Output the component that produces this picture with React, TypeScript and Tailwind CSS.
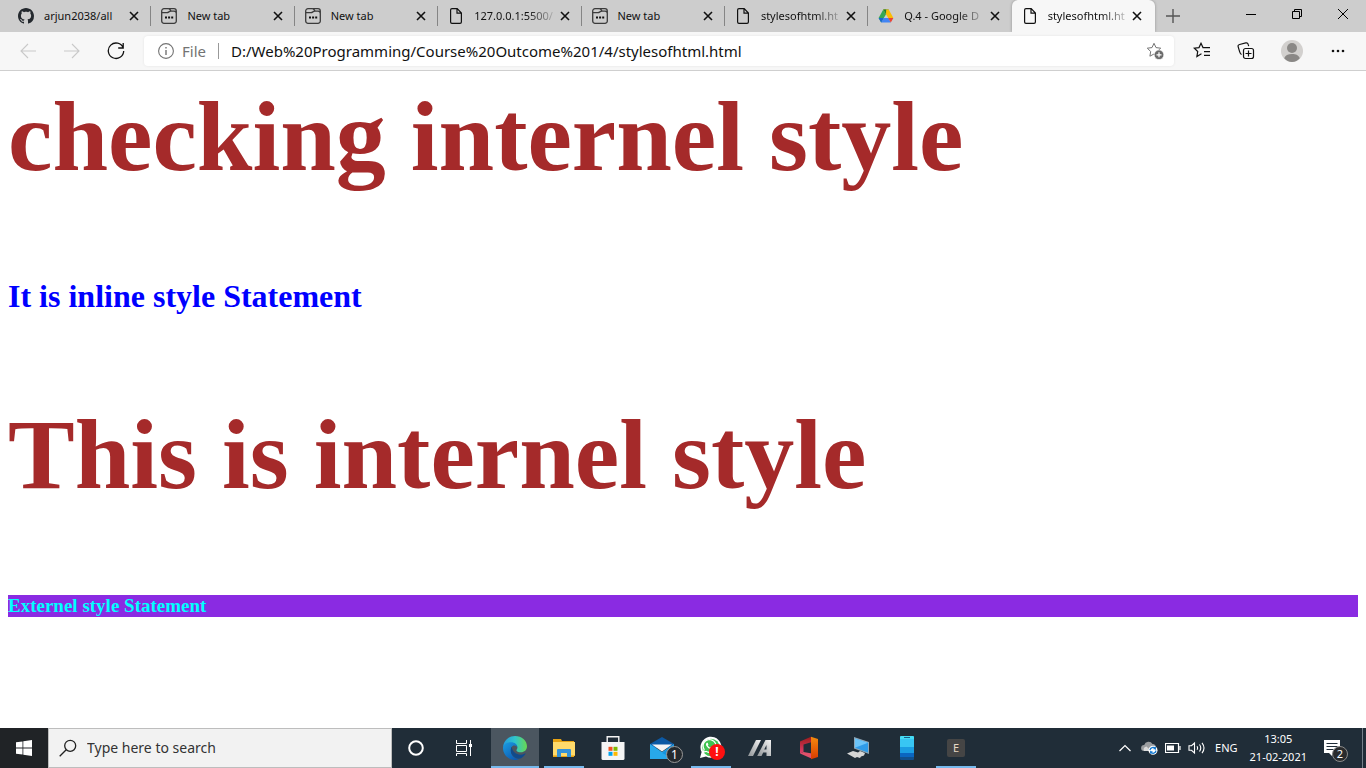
import React from "react";
import { FaWhatsapp } from "react-icons/fa";

type IconKind = "github" | "newtab" | "page" | "drive";

const tabs: { icon: IconKind; title: string; active?: boolean; faded?: boolean }[] = [
  { icon: "github", title: "arjun2038/all" },
  { icon: "newtab", title: "New tab" },
  { icon: "newtab", title: "New tab" },
  { icon: "page", title: "127.0.0.1:5500/", faded: true },
  { icon: "newtab", title: "New tab" },
  { icon: "page", title: "stylesofhtml.ht", faded: true },
  { icon: "drive", title: "Q.4 - Google D", faded: true },
  { icon: "page", title: "stylesofhtml.ht", active: true, faded: true },
];

function TabIcon({ kind }: { kind: IconKind }) {
  if (kind === "github")
    return (
      <svg viewBox="0 0 16 16" className="size-4 shrink-0" fill="#24292e">
        <path d="M8 0C3.58 0 0 3.58 0 8c0 3.54 2.29 6.53 5.47 7.59.4.07.55-.17.55-.38 0-.19-.01-.82-.01-1.49-2.01.37-2.53-.49-2.69-.94-.09-.23-.48-.94-.82-1.13-.28-.15-.68-.52-.01-.53.63-.01 1.08.58 1.23.82.72 1.21 1.87.87 2.33.66.07-.52.28-.87.51-1.07-1.78-.2-3.64-.89-3.64-3.95 0-.87.31-1.59.82-2.15-.08-.2-.36-1.02.08-2.12 0 0 .67-.21 2.2.82.64-.18 1.32-.27 2-.27s1.36.09 2 .27c1.53-1.04 2.2-.82 2.2-.82.44 1.1.16 1.92.08 2.12.51.56.82 1.27.82 2.15 0 3.07-1.87 3.75-3.65 3.95.29.25.54.73.54 1.48 0 1.07-.01 1.93-.01 2.2 0 .21.15.46.55.38A8.01 8.01 0 0 0 16 8c0-4.42-3.58-8-8-8z" />
      </svg>
    );
  if (kind === "newtab")
    return (
      <svg viewBox="0 0 16 16" className="size-4 shrink-0" fill="none" stroke="#3b3b3b" strokeWidth="1.3">
        <path d="M.7 3A2.3 2.3 0 0 1 3 .7h4.200c1 0 1.500.500 2 1.200l.9 1.300h3a2.300 2.300 0 0 1 2.200 2.300V13a2.300 2.300 0 0 1-2.300 2.300H3A2.300 2.300 0 0 1 .7 13zM.7 4.700h5.500c1.200 0 1.600-1.500 3.900-1.500M8 .7h5A2.300 2.300 0 0 1 15.300 3v3" />
        <path d="M4 9.500h2M7.100 9.500h2M10.200 9.500h2" stroke="#111" strokeWidth="2" />
      </svg>
    );
  if (kind === "drive")
    return (
      <svg viewBox="0 0 16 16" className="size-4 shrink-0">
        <path d="M5.300 1.500h5.400L8 6.200z" fill="#188038" />
        <path d="M5.300 1.500 8 6.200 3.200 14.500.6 10z" fill="#34a853" />
        <path d="M5.300 1.500h5.400L15.400 10h-5.200z" fill="#fbbc04" />
        <path d="M5.300 1.500h2.900L8 6.200z" fill="#188038" />
        <path d="M5.500 10h5l2.300 4.500H3.200z" fill="#4285f4" />
        <path d="M.6 10h4.900l-2.300 4.500z" fill="#1967d2" />
        <path d="M10.200 10h5.200l-2.600 4.500z" fill="#ea4335" />
      </svg>
    );
  return (
    <svg viewBox="0 0 16 16" className="size-4 shrink-0" fill="none" stroke="#111" strokeWidth="1.200">
      <path d="M2.600 2A1.400 1.400 0 0 1 4 .6h5.200L13.400 5v9a1.400 1.400 0 0 1-1.400 1.400H4A1.400 1.400 0 0 1 2.600 14zM9 .8V5.200h4.200" />
    </svg>
  );
}

function TabStrip() {
  return (
    <header className="flex h-8 shrink-0 bg-[#cdcdcd] pl-2">
      <nav aria-label="Tabs" className="flex max-w-[1147px] flex-1">
        {tabs.map((tab, i) => (
          <div
            key={i}
            className={
              tab.active
                ? "flex min-w-0 flex-1 items-center rounded-t-md bg-[#f7f7f7] pr-3 pl-2.5 shadow-[0_0_3px_rgba(0,0,0,0.3)]"
                : "flex min-w-0 flex-1 items-center pr-3 pl-2.5"
            }
          >
            <TabIcon kind={tab.icon} />
            <button
              className={
                tab.faded
                  ? "ml-2.5 min-w-0 flex-1 text-left text-[11px] whitespace-nowrap text-[#111] [mask-image:linear-gradient(to_right,black_54px,transparent_84px)]"
                  : "ml-2.5 min-w-0 flex-1 text-left text-[11px] whitespace-nowrap text-[#111]"
              }
            >
              {tab.title}
            </button>
            <button aria-label="Close tab" className="flex size-3 items-center justify-center">
              <svg viewBox="0 0 10 10" className="size-2.5" stroke="#111" strokeWidth="1.600">
                <path d="m1 1 8 8M9 1 1 9" />
              </svg>
            </button>
            {i < 7 && <span className={i < 6 ? "-mr-3 ml-2.5 h-5 w-px bg-[#858585]" : "-mr-3 ml-2.5 w-px"} />}
          </div>
        ))}
      </nav>
      <button aria-label="New tab" className="flex w-9 items-center justify-center">
        <svg viewBox="0 0 14 14" className="size-3.5" stroke="#555" strokeWidth="1.400">
          <path d="M7 0v14M0 7h14" />
        </svg>
      </button>
      <div className="ml-auto flex h-7">
        <button aria-label="Minimize" className="flex w-[46px] items-center justify-center">
          <svg viewBox="0 0 10 10" className="size-2.5" stroke="#000"><path d="M0 5.500h10" /></svg>
        </button>
        <button aria-label="Restore" className="flex w-[46px] items-center justify-center">
          <svg viewBox="0 0 10 10" className="size-2.5" fill="none" stroke="#000"><path d="M.5 2.500h7v7h-7zM2.500 2.500v-2h7v7h-2" /></svg>
        </button>
        <button aria-label="Close" className="flex w-[46px] items-center justify-center">
          <svg viewBox="0 0 10 10" className="size-2.5" stroke="#000"><path d="m0 0 10 10M10 0 0 10" /></svg>
        </button>
      </div>
    </header>
  );
}

const star = "m8 1.300 2 4.300 4.700.6-3.400 3.300.8 4.700L8 12l-4.100 2.200.8-4.700L1.300 6.200 6 5.600z";

function AddressBar() {
  return (
    <div className="flex h-[39px] shrink-0 items-center border-b border-[#cfcfcf] bg-[#f7f7f7]">
      <button aria-label="Back" className="ml-1.5 flex w-11 justify-center">
        <svg viewBox="0 0 16 16" className="size-4" fill="none" stroke="#c9c9c9" strokeWidth="1.100"><path d="M16 8H1M8 1 1 8l7 7" /></svg>
      </button>
      <button aria-label="Forward" className="flex w-11 justify-center">
        <svg viewBox="0 0 16 16" className="size-4" fill="none" stroke="#c9c9c9" strokeWidth="1.100"><path d="M0 8h15M8 1l7 7-7 7" /></svg>
      </button>
      <button aria-label="Refresh" className="flex w-11 justify-center">
        <svg viewBox="0 0 18 18" className="size-[18px]" fill="none" stroke="#111" strokeWidth="1.300"><path d="M16.200 6A7.700 7.700 0 1 0 16.700 9M16.200 1v5h-5" /></svg>
      </button>
      <div className="ml-1.5 flex h-[30px] min-w-0 flex-1 items-center rounded bg-white pl-3.5 shadow-[0_0_3px_rgba(0,0,0,0.08)]">
        <svg viewBox="0 0 16 16" className="size-4 shrink-0" fill="none" stroke="#737373" strokeWidth="1.100">
          <circle cx="8" cy="8" r="7.400" /><path d="M8 7v5M8 4v1.500" strokeWidth="1.400" />
        </svg>
        <label htmlFor="url" className="ml-2 text-[15px] text-[#737373]">File</label>
        <span className="mx-3 h-4 w-px bg-[#999]" />
        <input id="url" className="min-w-0 flex-1 bg-transparent text-[15px] text-[#111] outline-none" defaultValue="D:/Web%20Programming/Course%20Outcome%201/4/stylesofhtml.html" />
        <button aria-label="Add to favorites" className="mr-2.5">
          <svg viewBox="0 0 18 18" className="size-[18px]" fill="none" stroke="#737373">
            <path d={star} /><circle cx="13" cy="12.800" r="4.800" fill="#6b6b6b" stroke="#fff" strokeWidth=".6" /><path d="M10.500 12.800h5M13 10.300v5" stroke="#fff" strokeWidth="1.200" />
          </svg>
        </button>
      </div>
      <button aria-label="Favorites" className="ml-1.5 flex w-11 justify-center">
        <svg viewBox="0 0 18 18" className="size-[18px]" fill="none" stroke="#111" strokeWidth="1.200">
          <path d="M8.500 11.800 8 12l-4.100 2.600.8-5.100L1.300 6.200 6 5.600l2-4.300 2 4.300h7M11 9.600h6M11 13.400h6" />
        </svg>
      </button>
      <button aria-label="Collections" className="flex w-11 justify-center">
        <svg viewBox="0 0 18 18" className="size-[18px]" fill="none" stroke="#111" strokeWidth="1.200">
          <rect x="6.500" y="6.500" width="10" height="10" rx="2" /><path d="M11.500 8.500v6M8.500 11.500h6M4.600 12.500C3.300 12 3 11 2.600 9.600L1.200 4.800c-.4-1.300.2-2 1.400-2.300l6.200-1.600c1.200-.3 2 .2 2.300 1.300l.6 2" />
        </svg>
      </button>
      <button aria-label="Profile" className="flex w-12 justify-center">
        <svg viewBox="0 0 22 22" className="size-[22px]">
          <circle cx="11" cy="11" r="11" fill="#d2d0ce" /><circle cx="11" cy="8" r="5" fill="#8a8886" /><path d="M3.200 18.300C4 15.500 7 14 11 14s7 1.500 7.800 4.300A11 11 0 0 1 11 22a11 11 0 0 1-7.800-3.700z" fill="#8a8886" />
        </svg>
      </button>
      <button aria-label="Settings and more" className="mr-1.5 flex w-11 justify-center">
        <svg viewBox="0 0 14 4" className="h-1 w-3.5" fill="#111"><circle cx="2" cy="2" r="1.300" /><circle cx="7" cy="2" r="1.300" /><circle cx="12" cy="2" r="1.300" /></svg>
      </button>
    </div>
  );
}

function EdgeIcon() {
  return (
    <svg viewBox="0 0 24 24" className="size-6">
      <defs>
        <linearGradient id="edgeTop" x1="0" y1="0.500" x2="1" y2="0.500"><stop offset="0" stopColor="#2499dc" /><stop offset=".5" stopColor="#30c5cc" /><stop offset="1" stopColor="#68d850" /></linearGradient>
        <linearGradient id="edgeBody" x1="0" y1="0" x2="0.700" y2="1"><stop offset="0" stopColor="#1b9de2" /><stop offset="1" stopColor="#0d5ab2" /></linearGradient>
      </defs>
      <path d="M.1 11C.6 4.600 5.800 0 12 0c6.800 0 12 4.800 12 10.300 0 3.700-2.700 6-6 6-2.600 0-4.600-1-4.600-2.100 0-.7 1-1.100 1-2.700 0-2.200-2.200-4-5-4C4.800 7.500 1 8.500.1 11z" fill="url(#edgeTop)" />
      <path d="M0 12c0-3.600 4-5.800 8-5.800 3.800 0 6.400 2.200 6.400 5.300-.2-1-1.500-2-3.200-2-2.300 0-3.400 2.500-3.400 5 0 4.700 3.700 8.700 8.700 8.300-1.300.8-3 1.200-4.500 1.200C5.400 24 0 18.700 0 12z" fill="url(#edgeBody)" />
      <path d="M8.700 10.800c-.6 1-.9 2.300-.9 3.700 0 5 4.700 9 9.600 8 2-.9 4-2.700 5-4.500.3-.6 0-.9-.5-.6-5.600 3-12.100.5-13.200-6.600z" fill="#114a8b" />
    </svg>
  );
}

function ExplorerIcon() {
  return (
    <svg viewBox="0 0 24 24" className="size-6">
      <path d="M1 3h8l1 2h12v16H1z" fill="#e8a313" /><path d="M1 6h22v14H1z" fill="#ffda6b" /><path d="M5 21v-7q0-1 1-1h12q1 0 1 1v7h-4v-4H9v4z" fill="#3492d8" /><path d="M1 19h4v1H1zM19 19h4v1h-4z" fill="#f4bb36" />
    </svg>
  );
}

function StoreIcon() {
  return (
    <svg viewBox="0 0 24 24" className="size-6">
      <path d="M.5 6h23v16.500q0 1.500-1.500 1.500H2Q.5 24 .5 22.500z" fill="#f5f5f5" /><path d="M6.200 8V.8h11.600V8" fill="none" stroke="#f5f5f5" strokeWidth="1.400" />
      <path d="M7.500 10.800h4v4h-4z" fill="#f25022" /><path d="M12.500 10.800h4v4h-4z" fill="#7fba00" /><path d="M7.500 15.800h4v4h-4z" fill="#00a4ef" /><path d="M12.500 15.800h4v4h-4z" fill="#ffb900" />
    </svg>
  );
}

function MailIcon() {
  return (
    <svg viewBox="0 0 24 24" className="size-6"><path d="M0 8 12 1l12 7v4H0z" fill="#0c59a4" /><path d="M0 8v15h24V8l-12 8z" fill="#28a8ea" /><path d="m24 9-12 8 12 6z" fill="#1593dd" /><path d="M2 8.500h20l-10 7z" fill="#f5f5f5" /></svg>
  );
}

function ArmouryIcon() {
  return (
    <svg viewBox="0 0 24 16" className="h-4 w-6">
      <defs>
        <linearGradient id="steel" x1="1" y1="0" x2="0" y2="1"><stop offset="0" stopColor="#f4f4f4" /><stop offset="1" stopColor="#8f9396" /></linearGradient>
      </defs>
      <path d="M8 0h5L5 16H0z" fill="url(#steel)" />
      <path d="M17.500 0H23v16h-4.500v-3.500h-3.300L13.500 16H9.200zM18.500 9.500V5l-2.300 4.500z" fill="url(#steel)" fillRule="evenodd" />
    </svg>
  );
}

function OfficeIcon() {
  return (
    <svg viewBox="0 0 20 24" className="h-6 w-5">
      <defs>
        <linearGradient id="officeRight" x1="0" y1="0" x2="0" y2="1"><stop offset="0" stopColor="#f38b0e" /><stop offset="1" stopColor="#d83b01" /></linearGradient>
        <linearGradient id="officeLeft" x1="0" y1="0" x2="0" y2="1"><stop offset="0" stopColor="#9e1b1b" /><stop offset="1" stopColor="#e0406e" /></linearGradient>
      </defs>
      <path d="M12 .8 1 5.500V17.500l3.500-1.500V8.500L13 6z" fill="url(#officeLeft)" />
      <path d="m1 17.500 3.500-1.500 8.500 1.500v5.300L4.500 19z" fill="#e2506b" />
      <path d="M12 .8 19 3v18l-7 2.200z" fill="url(#officeRight)" />
    </svg>
  );
}

function RemoteIcon() {
  return (
    <svg viewBox="0 0 24 24" className="size-6">
      <path d="m8 1 15 5v12L8 12.500z" fill="#8fa6b5" />
      <path d="m9 2.500 13 4.300v9.700L9 11.700z" fill="#2f9be8" />
      <path d="m9 2.500 13 4.300-13 4.900z" fill="#6cc4f8" />
      <path d="m1 17.500 6-2.500 5 1.500 2-1.500 5 2-1 2.500-3 1-1 1.500-3-1-2 1z" fill="#d6d6d6" />
    </svg>
  );
}

function PhoneIcon() {
  return (
    <svg viewBox="0 0 14 24" className="h-6 w-3.5"><rect width="14" height="24" rx="1" fill="#114f8c" /><path d="M0 1q0-1 1-1h12q1 0 1 1v3H0z" fill="#45dcf5" /><path d="M0 3h14v8H0z" fill="#38c6f3" /><path d="M0 11h14v6H0z" fill="#1b9de2" /><path d="M0 17h14v4H0z" fill="#0b66c0" /><path d="M4 1.500h6" stroke="#175e88" /></svg>
  );
}

const apps: { name: string; icon: React.ReactNode; running?: boolean; current?: boolean }[] = [
  { name: "Microsoft Edge", icon: <EdgeIcon />, current: true },
  { name: "File Explorer", icon: <ExplorerIcon />, running: true },
  { name: "Microsoft Store", icon: <StoreIcon /> },
  {
    name: "Mail",
    icon: (
      <span className="relative">
        <MailIcon />
        <span className="absolute top-2.5 left-4 flex size-[17px] items-center justify-center rounded-full border border-[#999] bg-[#24292d] text-xs leading-none text-white">1</span>
      </span>
    ),
  },
  {
    name: "WhatsApp",
    running: true,
    icon: (
      <span className="relative">
        <svg viewBox="0 0 24 24" className="size-6"><path d="m1 22 1.600-6A10.500 10.500 0 1 1 7 20.500z" fill="#fff" /><circle cx="12" cy="11.500" r="8.700" fill="#40c351" /><FaWhatsapp x="2.500" y="2" width="19" height="19" color="#fff" /></svg>
        <span className="absolute top-2 left-2.5 flex size-4 items-center justify-center rounded-full bg-[#ff1010] text-xs leading-none font-bold text-white">!</span>
      </span>
    ),
  },
  { name: "Armoury", icon: <ArmouryIcon /> },
  { name: "Office", icon: <OfficeIcon /> },
  { name: "Remote Desktop", icon: <RemoteIcon /> },
  { name: "Your Phone", icon: <PhoneIcon /> },
  { name: "E", running: true, icon: <span className="flex size-[18px] items-center justify-center rounded-xs bg-[#454545] text-[11px] text-[#e6d8c4]">E</span> },
];

function Taskbar() {
  return (
    <footer className="flex h-10 shrink-0 bg-[#202d38] text-white">
      <button aria-label="Start" className="flex w-12 items-center justify-center bg-[#202326]">
        <svg viewBox="0 0 16 16" className="size-4" fill="#fff"><path d="M0 2.300 6.500 1.400v6.200H0zM7.300 1.300 16 0v7.600H7.300zM0 8.400h6.500v6.200L0 13.700zM7.300 8.400H16V16l-8.700-1.300z" /></svg>
      </button>
      <label className="flex w-[344px] items-center border border-[#bdbdbd] bg-[#f2f2f2] pl-2.5">
        <svg viewBox="0 0 18 18" className="size-[18px] shrink-0" fill="none" stroke="#222" strokeWidth="1.300"><circle cx="11.200" cy="6.800" r="5.500" /><path d="m7.200 10.800-6.500 6.500" /></svg>
        <input aria-label="Search" placeholder="Type here to search" className="ml-2.5 min-w-0 flex-1 bg-transparent text-sm outline-none placeholder:text-[#333]" />
      </label>
      <button aria-label="Cortana" className="flex w-12 items-center justify-center">
        <svg viewBox="0 0 16 16" className="size-4" fill="none" stroke="#fff" strokeWidth="2"><circle cx="8" cy="8" r="6.800" /></svg>
      </button>
      <button aria-label="Task view" className="flex w-12 items-center justify-center">
        <svg viewBox="0 0 16 16" className="size-4" fill="none" stroke="#fff"><path d="M.5 0v3.500h10V0M.5 5.500h10v6H.5zM.5 16v-2.500h10V16M14.500 0v16" /><path d="M13 4h3v3h-3z" fill="#fff" stroke="none" /></svg>
      </button>
      <div className="ml-[3px] flex gap-px">
        {apps.map((app) => (
          <button
            key={app.name}
            aria-label={app.name}
            className={app.current ? "flex w-12 flex-col items-center bg-[#4b5660]" : "flex w-12 flex-col items-center"}
          >
            <span className="flex flex-1 items-center justify-center pt-0.5">{app.icon}</span>
            <span className={app.current ? "h-0.5 w-full bg-[#76b9ed]" : app.running ? "h-0.5 w-10 bg-[#76b9ed]" : "h-0.5"} />
          </button>
        ))}
      </div>
      <div className="ml-auto flex items-center">
        <button aria-label="Show hidden icons" className="flex w-6 justify-center">
          <svg viewBox="0 0 12 8" className="h-2 w-3" fill="none" stroke="#fff" strokeWidth="1.200"><path d="m.5 7 5.500-5.500L11.500 7" /></svg>
        </button>
        <button aria-label="OneDrive" className="flex w-6 justify-center">
          <svg viewBox="0 0 17 14" className="h-3.5 w-[17px]"><path d="M3 10a3 3 0 0 1 .2-6A4.500 4.500 0 0 1 11.500 3 3.800 3.800 0 0 1 15 7v3z" fill="#9a9da0" /><path d="M3 10a3 3 0 0 1 2.500-4.500L10 10z" fill="#dadada" /><circle cx="12" cy="9.300" r="4.500" fill="#fff" /><path d="M9 9a3 3 0 0 1 5.300-1.500V5.800M15 9.700a3 3 0 0 1-5.300 1.500v1.600M14.500 7.500h-2M9.500 11h2" stroke="#1479d1" fill="none" strokeWidth="1.300" /></svg>
        </button>
        <button aria-label="Battery" className="flex w-6 justify-center">
          <svg viewBox="0 0 16 10" className="h-2.5 w-4" fill="none" stroke="#fff"><path d="M.5 .5h13v9H.5zM15 3v4" strokeWidth="1.200" /><path d="M2 2.500h7v5H2z" fill="#fff" stroke="none" /></svg>
        </button>
        <button aria-label="Volume" className="flex w-6 justify-center">
          <svg viewBox="0 0 18 14" className="h-3.5 w-[18px]" fill="none" stroke="#fff" strokeWidth="1.100"><path d="M1 4.700h2.500L6.500 2v10L3.500 9.300H1zM9 5.200q1.200 1.800 0 3.600M11.500 3.500q2.500 3.500 0 7M14 1.800q4 5.200 0 10.400" /></svg>
        </button>
        <button className="ml-1.5 text-[11px]">ENG</button>
        <button className="ml-3 text-center text-[11px] leading-[18px]">13:05<br />21-02-2021</button>
        <button aria-label="Notifications" className="relative ml-[17px] flex w-[22px]">
          <svg viewBox="0 0 17 17" className="size-[17px]"><path d="M0 0h16v13h-8v3l-3-3H0z" fill="#fff" /><path d="M2.500 3.500h11M2.500 6.500h11M2.500 9.500h7" stroke="#202d38" /></svg>
          <span className="absolute top-1.5 left-2 flex size-4 items-center justify-center rounded-full border border-[#8b8b8b] bg-[#292b2d] text-[11px] leading-none">2</span>
        </button>
        <span className="mr-[3px] ml-4 h-10 w-px bg-[#75808a]" />
      </div>
    </footer>
  );
}

export default function App() {
  return (
    <div className="flex h-screen flex-col bg-white font-['Noto_Sans','Open_Sans',sans-serif]">
      <TabStrip />
      <AddressBar />
      <main className="min-h-0 flex-1 overflow-hidden px-2 pt-2 font-['Liberation_Serif',serif] font-bold">
        <h1 className="text-[100px] leading-[116px] text-[#a52a2a]">checking internel style</h1>
        <h2 className="mt-[82px] text-[32px] leading-[38px] text-[#0000ff]">It is inline style Statement</h2>
        <h1 className="mt-[82px] text-[100px] leading-[116px] text-[#a52a2a]">This is internel style</h1>
        <h3 className="mt-[82px] bg-[#8a2be2] text-[19px] leading-[22px] text-[#00ffff]">Externel style Statement</h3>
      </main>
      <Taskbar />
    </div>
  );
}
